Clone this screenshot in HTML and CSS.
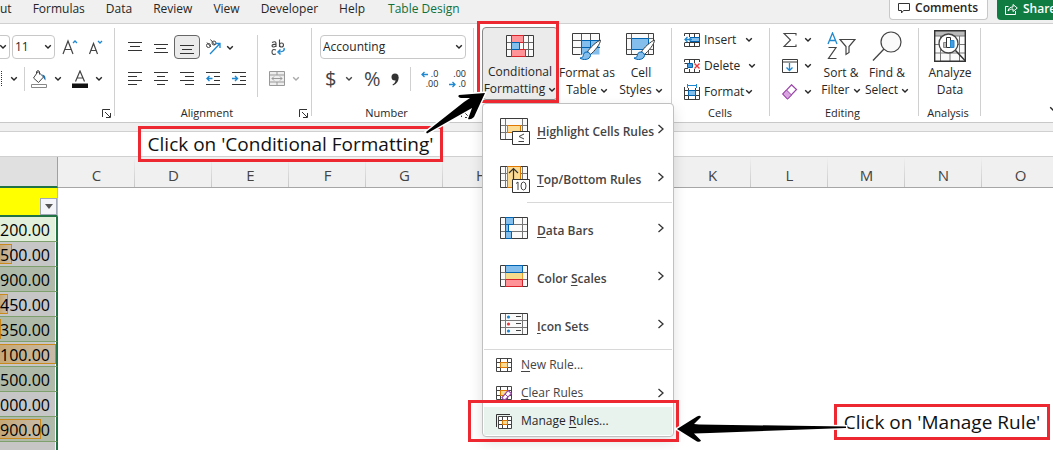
FILE: index.html
```html
<!DOCTYPE html>
<html lang="en">
<head>
<meta charset="utf-8">
<title>Conditional Formatting</title>
<link rel="stylesheet" href="styles.css">
</head>
<body>
<svg class="defs" aria-hidden="true">
  <symbol id="chev" viewBox="0 0 8 6"><path d="M1.2 1.2 4 4 6.800 1.200" fill="none" stroke="currentColor" stroke-width="1.400"/></symbol>
  <symbol id="launch" viewBox="0 0 9 9"><path d="M.5 8V.5H8M3 3l5 5M8.500 4v4.500H4" fill="none" stroke="#333"/></symbol>
  <symbol id="next" viewBox="0 0 8 10"><path d="M1.500 1 6 5 1.500 9" fill="none" stroke="#333" stroke-width="1.300"/></symbol>
  <symbol id="grid" viewBox="0 0 28 22"><path d="M.5.5h27v21H.5z" fill="#fafafa"/><path d="M5.500 1v20M22.500 1v20M1 7.500h26M1 14.500h26" stroke="#777"/><path d="M.5.5h27v21H.5z" fill="none" stroke="#3b3b3b"/></symbol>
  <symbol id="brush" viewBox="0 0 24 22"><path d="M21.500 1.200C18 2 10 9.500 8.500 13l3 2.500C15 12.500 21.500 5 21.500 1.200z" fill="#fff" stroke="#3b3b3b"/><path d="M8 13c-3 0-3.500 2-3.800 3.800C4 18.500 2.500 19 1 19c3 2.500 10 2 10.500-2.500C11.500 14.500 10 13 8 13z" fill="#83beec" stroke="#0063b1"/></symbol>
</svg>
<div class="app">
  <header class="tabs">
    <nav class="tab-list">
      <button class="tab">ut</button><button class="tab">Formulas</button><button class="tab">Data</button><button class="tab">Review</button><button class="tab">View</button><button class="tab">Developer</button><button class="tab">Help</button><button class="tab active">Table Design</button>
    </nav>
    <button class="comments"><svg width="12" height="12" viewBox="0 0 12 12"><path d="M.5 1.500h11v7H5.500L3.500 11V8.500h-3z" fill="none" stroke="#333"/></svg>Comments</button>
    <button class="share"><svg width="13" height="12" viewBox="0 0 13 12"><path d="M3.500 3.500h-3v8h10V8M3 8c.5-3 2.500-4 5-4V1.500L12.300 5 8 8.500V6C6 6 4.500 6.500 3 8z" fill="none" stroke="#fff"/></svg>Share</button>
  </header>

  <section class="ribbon">
    <div class="group font">
      <div class="tools">
        <div class="row">
          <span class="pick name"><select aria-label="Font name"><option></option></select><svg class="chev"><use href="#chev"/></svg></span>
          <span class="pick size"><select aria-label="Font size"><option>11</option></select><svg class="chev"><use href="#chev"/></svg></span>
          <button class="tool" aria-label="Increase font size"><svg width="16" height="16" viewBox="0 0 16 16"><path d="M1 15 6 2l5 13M2.500 10.500h7" fill="none" stroke="#444" stroke-width="1.200"/><path d="m11 4 2-2 2 2" fill="none" stroke="#1e88d0" stroke-width="1.300"/></svg></button>
          <button class="tool" aria-label="Decrease font size"><svg width="16" height="16" viewBox="0 0 16 16"><path d="m1.500 15 4-10.500 4 10.500M3 11.500h5" fill="none" stroke="#444" stroke-width="1.200"/><path d="m10 2 2 2 2-2" fill="none" stroke="#1e88d0" stroke-width="1.300"/></svg></button>
        </div>
        <div class="row">
          <button class="borders" aria-label="Borders"><svg width="3" height="16" viewBox="0 0 3 16"><path d="M1.500 0v16" stroke="#333" stroke-dasharray="1 1"/></svg><svg class="chev"><use href="#chev"/></svg></button>
          <i class="bar"></i>
          <button class="split" aria-label="Fill color"><svg width="16" height="18" viewBox="0 0 16 18"><path d="M7 1.500 12.500 7l-5 5.500L2.500 8zM5.500 3.500V1.500q1.500-2 3 0v3" fill="none" stroke="#444"/><path d="M11 4.500q4 0 3.500 6-1.500-1-3-5z" fill="#1e70b0"/><path d="M.5 14.500h15v3H.5z" fill="#fff" stroke="#888"/></svg><svg class="chev"><use href="#chev"/></svg></button>
          <button class="split" aria-label="Font color"><svg width="16" height="18" viewBox="0 0 16 18"><path d="M3.500 11.500 8 1l4.500 10.500M5 8h6" fill="none" stroke="#444" stroke-width="1.200"/><path d="M0 13.500h16V18H0z" fill="#111"/></svg><svg class="chev"><use href="#chev"/></svg></button>
        </div>
      </div>
      <div class="caption"><span></span><svg class="launch"><use href="#launch"/></svg></div>
    </div>

    <div class="group align">
      <div class="tools wide">
        <div class="col">
          <div class="row flush">
            <button class="tool" aria-label="Top align"><svg width="14" height="14" viewBox="0 0 14 14"><path d="M0 2.500h14M2 6.500h10M0 10.500h14" stroke="#333"/></svg></button>
            <button class="tool" aria-label="Middle align"><svg width="14" height="14" viewBox="0 0 14 14"><path d="M0 4.500h14M2 8.500h10M0 12.500h14" stroke="#333"/></svg></button>
            <button class="tool on" aria-label="Bottom align"><svg width="14" height="14" viewBox="0 0 14 14"><path d="M0 5.500h14M2 9.500h10M0 13.500h14" stroke="#333"/></svg></button>
            <button class="tool" aria-label="Orientation"><svg width="16" height="16" viewBox="0 0 16 16"><g fill="none" stroke="#444"><circle cx="3.500" cy="6.500" r="2"/><path d="m2 3.500 4 4.500M5.500.5 10 6"/><circle cx="9" cy="4" r="2"/></g><path d="M5 15 15 4.500M10.500 4.500H15V9" fill="none" stroke="#1e88d0" stroke-width="1.300"/></svg></button>
            <button class="drop" aria-label="Orientation options"><svg class="chev"><use href="#chev"/></svg></button>
          </div>
          <div class="row flush">
            <button class="tool" aria-label="Align left"><svg width="14" height="14" viewBox="0 0 14 14"><path d="M0 .5h14M0 4.500h9M0 8.500h14M0 12.500h9" stroke="#333"/></svg></button>
            <button class="tool" aria-label="Center"><svg width="14" height="14" viewBox="0 0 14 14"><path d="M0 .5h14M3 4.500h8M0 8.500h14M3 12.500h8" stroke="#333"/></svg></button>
            <button class="tool" aria-label="Align right"><svg width="14" height="14" viewBox="0 0 14 14"><path d="M0 .5h14M5 4.500h9M0 8.500h14M5 12.500h9" stroke="#333"/></svg></button>
            <button class="tool" aria-label="Decrease indent"><svg width="14" height="14" viewBox="0 0 14 14"><path d="M0 .5h14M8 4.500h6M8 8.500h6M0 12.500h14" stroke="#333"/><path d="M6.500 6.500H1M3.500 4 1 6.500 3.500 9" fill="none" stroke="#1e88d0" stroke-width="1.400"/></svg></button>
            <button class="tool" aria-label="Increase indent"><svg width="14" height="14" viewBox="0 0 14 14"><path d="M0 .5h14M8 4.500h6M8 8.500h6M0 12.500h14" stroke="#333"/><path d="M0 6.500h5.500M3 4l2.500 2.500L3 9" fill="none" stroke="#1e88d0" stroke-width="1.400"/></svg></button>
          </div>
        </div>
        <i class="bar tall"></i>
        <div class="col">
          <div class="row flush"><button class="tool wrap" aria-label="Wrap text"><svg width="15" height="17" viewBox="0 0 15 17"><g fill="none" stroke="#444" stroke-width="1.100"><path d="M1 3.500q4-2 4 1V8M5 5.500Q1 5 1 7q1 2 4 0M8.500.5V8"/><circle cx="10.500" cy="6" r="2"/><path d="M5 11q-4-1.500-4 2t4 2"/></g><path d="M13 9q1.500 4-6 4M9.500 10.500 7 13l2.500 2.500" fill="none" stroke="#1e88d0" stroke-width="1.500"/></svg></button></div>
          <div class="row flush"><button class="split faded" aria-label="Merge"><svg width="16" height="16" viewBox="0 0 16 16"><path d="M.5.5h15v14H.5zM.5 4h15M.5 11h15M8 .5V4M8 11v3.500" fill="#eee" stroke="#999"/><path d="M3 7.500h10M5 5.500l-2 2 2 2M11 5.500l2 2-2 2" fill="none" stroke="#999"/></svg><svg class="chev"><use href="#chev"/></svg></button></div>
        </div>
      </div>
      <div class="caption"><span>Alignment</span><svg class="launch"><use href="#launch"/></svg></div>
    </div>

    <div class="group number">
      <div class="tools">
        <span class="pick format"><select aria-label="Number format"><option>Accounting</option></select><svg class="chev"><use href="#chev"/></svg></span>
        <div class="row num">
          <button class="split sym">$<svg class="chev"><use href="#chev"/></svg></button>
          <button class="sym">%</button>
          <button aria-label="Comma style"><svg width="8" height="13" viewBox="0 0 8 13"><circle cx="4" cy="4" r="3.500" fill="#333"/><path d="M7.500 4Q8 10 2 12.500L1.500 11.500Q5 9.500 4.500 6z" fill="#333"/></svg></button>
          <i class="bar"></i>
          <button class="dec" aria-label="Increase decimal"><span>.0</span><span>.00</span><svg class="left" width="7" height="7" viewBox="0 0 7 7"><path d="M7 3.500H1M3.500 1 1 3.500 3.500 6" fill="none" stroke="#1e88d0" stroke-width="1.300"/></svg></button>
          <button class="dec" aria-label="Decrease decimal"><span>.00</span><span>.0</span><svg class="right" width="7" height="7" viewBox="0 0 7 7"><path d="M0 3.500h6M3.500 1 6 3.500 3.500 6" fill="none" stroke="#1e88d0" stroke-width="1.300"/></svg></button>
        </div>
      </div>
      <div class="caption"><span>Number</span><svg class="launch"><use href="#launch"/></svg></div>
    </div>

    <div class="group styles">
      <button class="big pressed"><svg width="28" height="24" viewBox="0 0 28 24"><path d="M.5 1.500h27v21H.5z" fill="#fafafa"/><path d="M5.500 1.500v21M17.500 1.500v21M22.500 1.500v21M0 8.500h28M0 15.500h28" stroke="#666"/><path d="M.5 1.500h27v21H.5z" fill="none" stroke="#3b3b3b"/><path d="M5.500 1.500h12v7h-12zM5.500 15.500h14v7h-14z" fill="#ff9398" stroke="#d8232a"/><path d="M5.500 8.500h8v7h-8z" fill="#83beec" stroke="#0063b1"/></svg><span>Conditional</span><span>Formatting <svg class="chev"><use href="#chev"/></svg></span></button>
      <button class="big"><svg width="31" height="28" viewBox="0 0 31 28"><path d="M.5 1.500h27v21H.5z" fill="#fafafa"/><path d="M9.500 8.500h18v14h-18z" fill="#83beec"/><path d="M9.500 1.500v21M18.500 1.500v21M0 8.500h28M0 15.500h28" stroke="#555"/><path d="M9.500 22.500v-14h18M9.500 15.500h18M18.500 8.500v14" fill="none" stroke="#0063b1"/><path d="M27.500 8V1.500H.5v21h8" fill="none" stroke="#3b3b3b"/><use href="#brush" x="7" y="7" width="24" height="22"/></svg><span>Format as</span><span>Table <svg class="chev"><use href="#chev"/></svg></span></button>
      <button class="big"><svg width="31" height="28" viewBox="0 0 31 28"><path d="M.5 1.500h27v21H.5z" fill="#fafafa"/><path d="M5.500 1.500v21M22.500 1.500v21M0 6.500h28M0 17.500h28" stroke="#666"/><path d="M.5 1.500h27v21H.5z" fill="none" stroke="#3b3b3b"/><path d="M5.500 6.500h17v11h-17z" fill="#83beec" stroke="#0063b1"/><use href="#brush" x="7" y="7" width="24" height="22"/></svg><span>Cell</span><span>Styles <svg class="chev"><use href="#chev"/></svg></span></button>
    </div>

    <div class="group cells">
      <div class="list">
        <button class="line"><svg width="16" height="14" viewBox="0 0 16 14"><path d="M.5 3V.5h15v13H.5V10M5.500.5V4M10.500.5v13M5.500 10v3.500M.5 9.500h15" fill="none" stroke="#3b3b3b"/><path d="M6 4.500h9.500v4H6z" fill="#83beec" stroke="#0063b1"/><path d="M8 6.500H1M3.500 4 1 6.500 3.500 9" fill="none" stroke="#1e88d0" stroke-width="1.300"/></svg><span>Insert</span><svg class="chev"><use href="#chev"/></svg></button>
        <button class="line"><svg width="16" height="14" viewBox="0 0 16 14"><path d="M.5 3V.5h15V3M.5 10v3.500h15V11M5.500.5V4M10.500.5V4M5.500 10v3.500M10.500 10v3.500M.5 4.500H4M.5 9.500H4" fill="none" stroke="#3b3b3b"/><path d="M3.500 4.500h5v4h-5z" fill="#4a9bdd" stroke="#0063b1"/><path d="m10.500 4.500 5 5m0-5-5 5" stroke="#e8393f" stroke-width="1.400"/></svg><span class="longer">Delete</span><svg class="chev"><use href="#chev"/></svg></button>
        <button class="line"><svg width="16" height="16" viewBox="0 0 16 16"><path d="M.5 3v12.500h15V3M4.500 4v11.500M11.500 4v11.500M.5 6.500h15M.5 11.500h15" fill="none" stroke="#3b3b3b"/><path d="M4.500 6.500h7v5h-7z" fill="#83beec" stroke="#0063b1"/><path d="M3.500 0v4M12.500 0v4M3.500 1.500h9" stroke="#1e88d0"/></svg><span>Format</span><svg class="chev"><use href="#chev"/></svg></button>
      </div>
      <div class="caption"><span>Cells</span></div>
    </div>

    <div class="group editing">
      <div class="tools wide">
        <div class="list">
          <button class="line" aria-label="AutoSum"><svg width="16" height="14" viewBox="0 0 16 14"><path d="M14 2.500V.5H2L8.500 7 2 13.500h12v-2" fill="none" stroke="#444" stroke-width="1.100"/></svg><svg class="chev"><use href="#chev"/></svg></button>
          <button class="line" aria-label="Fill"><svg width="16" height="14" viewBox="0 0 16 14"><path d="M.5.5h15v13H.5zM.5 3h15" fill="none" stroke="#3b3b3b"/><path d="M7.500 4v7M4.500 8.500l3 3 3-3" fill="none" stroke="#1e88d0" stroke-width="1.300"/></svg><svg class="chev"><use href="#chev"/></svg></button>
          <button class="line" aria-label="Clear"><svg width="16" height="16" viewBox="0 0 16 16"><path d="M9.500.8 14.500 5.500 5.500 15 .8 10z" fill="#fff" stroke="#9a45a8" stroke-width="1.200"/><path d="M4.500 6 9.500 11l-4 4L.8 10z" fill="#d9a5e0" stroke="#9a45a8"/></svg><svg class="chev"><use href="#chev"/></svg></button>
        </div>
        <button class="big"><svg width="29" height="28" viewBox="0 0 29 28"><path d="M1 12 5.500 1 10 12M2.500 8.500h6" fill="none" stroke="#1e88d0" stroke-width="1.300"/><path d="M1.500 15.500H9l-7.500 11H9.500" fill="none" stroke="#444" stroke-width="1.200"/><path d="M13 7.500h15l-6 7v6l-3 2v-8z" fill="#fff" stroke="#444" stroke-width="1.200"/></svg><span>Sort &amp;</span><span>Filter <svg class="chev"><use href="#chev"/></svg></span></button>
        <button class="big"><svg width="30" height="30" viewBox="0 0 30 30"><circle cx="19" cy="11" r="10" fill="#fafafa" stroke="#444" stroke-width="1.200"/><path d="M12 18 1 29.500" stroke="#444" stroke-width="1.300"/></svg><span>Find &amp;</span><span>Select <svg class="chev"><use href="#chev"/></svg></span></button>
      </div>
      <div class="caption"><span>Editing</span></div>
    </div>

    <div class="group analysis">
      <button class="big"><svg width="32" height="32" viewBox="0 0 32 32"><path d="M.5.5h31v31H.5z" fill="#fafafa"/><path d="M1 1h30v5H1z" fill="#bbb"/><path d="M0 6h32M0 14.500h32M0 23h32M6.500 6v26M16 6v26M25.500 6v26" stroke="#777"/><path d="M.7.7h30.600v30.600H.7z" fill="none" stroke="#333" stroke-width="1.400"/><circle cx="14.500" cy="13.500" r="9.500" fill="#fff" stroke="#444" stroke-width="1.300"/><path d="M9.500 12.500h3v5h-3z" fill="#bbb" stroke="#888"/><path d="M12.500 7.500h4v10h-4z" fill="#fff" stroke="#333"/><path d="M16.500 10.500h3.500v7h-3.500z" fill="#4a9bdd" stroke="#1e88d0"/><path d="m21.500 20.500 10 10.500" stroke="#333" stroke-width="1.500"/></svg><span>Analyze</span><span>Data</span></button>
      <div class="caption"><span>Analysis</span></div>
    </div>
    <div class="ribbon-end"><svg class="chev"><use href="#chev"/></svg></div>
  </section>

  <input class="formula" type="text" aria-label="Formula bar">

  <table class="sheet">
    <colgroup><col class="first"><col span="13" class="rest"></colgroup>
    <thead><tr><th class="sel"></th><th>C</th><th>D</th><th>E</th><th>F</th><th>G</th><th>H</th><th></th><th></th><th>K</th><th>L</th><th>M</th><th>N</th><th>O</th></tr></thead>
    <tbody>
      <tr class="head"><td><button class="filter" aria-label="Filter"><svg width="8" height="5" viewBox="0 0 8 5"><path d="M0 0h8L4 5z" fill="#555"/></svg></button></td></tr>
      <tr class="first-row"><td>200.00</td></tr>
      <tr class="odd"><td><i class="data" style="width:12px"></i><b>500.00</b></td></tr>
      <tr class="even"><td>900.00</td></tr>
      <tr class="odd"><td><i class="data" style="width:8px"></i><b>450.00</b></td></tr>
      <tr class="even"><td><i class="data" style="width:1px"></i><b>350.00</b></td></tr>
      <tr class="odd"><td><i class="data" style="width:56px"></i><b>100.00</b></td></tr>
      <tr class="even"><td>500.00</td></tr>
      <tr class="odd"><td>000.00</td></tr>
      <tr class="even"><td><i class="data" style="width:41px"></i><b>900.00</b></td></tr>
      <tr class="odd"><td></td></tr>
    </tbody>
  </table>

  <div class="menu">
    <button class="item"><svg width="31" height="28" viewBox="0 0 31 28"><use href="#grid" width="28" height="22"/><path d="M7.500 7.500h13v7h-13z" fill="#fcdc94" stroke="#e07800"/><path d="M12.500 13.500h17v13h-17z" fill="#fff" stroke="#333"/><path d="m24 16-5 2.500 5 2.500M18.500 23.500H24" fill="none" stroke="#444"/></svg><span><u>H</u>ighlight Cells Rules</span><svg class="next"><use href="#next"/></svg></button>
    <button class="item"><svg width="31" height="28" viewBox="0 0 31 28"><use href="#grid" width="28" height="22"/><path d="M7.500.5h13v21h-13z" fill="#fcdc94" stroke="#e07800"/><path d="M13.500 13V3M9 7l4.500-4.500L18 7" fill="none" stroke="#333" stroke-width="1.200"/><path d="M12.500 13.500h17v13h-17z" fill="#fff" stroke="#333"/><path d="m16 17.500 2-1.500v8" fill="none" stroke="#444"/><ellipse cx="23.500" cy="20" rx="2.500" ry="4" fill="none" stroke="#444"/></svg><span><u>T</u>op/Bottom Rules</span><svg class="next"><use href="#next"/></svg></button>
    <hr class="inset">
    <button class="item"><svg width="31" height="28" viewBox="0 0 31 28"><use href="#grid" width="28" height="22"/><path d="M5.500.5h8v7h-8zM5.500 7.500h3v7h-3zM5.500 14.500h6v7h-6z" fill="#83beec" stroke="#0063b1"/></svg><span><u>D</u>ata Bars</span><svg class="next"><use href="#next"/></svg></button>
    <button class="item"><svg width="31" height="28" viewBox="0 0 31 28"><use href="#grid" width="28" height="22"/><path d="M5.500 7.500h17v7h-17z" fill="#f5db8c" stroke="#e0a030"/><path d="M5.500.5h17v7h-17z" fill="#83beec" stroke="#0063b1"/><path d="M5.500 14.500h17v7h-17z" fill="#ff9398" stroke="#d8232a"/></svg><span>Color <u>S</u>cales</span><svg class="next"><use href="#next"/></svg></button>
    <button class="item"><svg width="31" height="28" viewBox="0 0 31 28"><use href="#grid" width="28" height="22"/><circle cx="8.500" cy="4" r="1.600" fill="#1e88d0"/><circle cx="8.500" cy="11" r="1.600" fill="#e8393f"/><circle cx="8.500" cy="18" r="1.600" fill="#1e88d0"/><path d="M16 3.500h5M16 10.500h5M16 17.500h5" stroke="#444"/></svg><span><u>I</u>con Sets</span><svg class="next"><use href="#next"/></svg></button>
    <hr>
    <button class="item small"><svg width="16" height="14" viewBox="0 0 16 14"><path d="M.5.5h15v13H.5zM4.500.5v13M11.500.5v13M.5 4.500h15M.5 9.500h15" fill="#fff" stroke="#444"/><path d="M4.500 4.500h7v5h-7z" fill="#fcdc94" stroke="#e07800"/></svg><span><u>N</u>ew Rule...</span></button>
    <button class="item small"><svg width="16" height="14" viewBox="0 0 16 14"><path d="M.5.5h15v13H.5zM4.500.5v13M11.500.5v13M.5 4.500h15M.5 9.500h15" fill="#fff" stroke="#444"/><path d="M4.500 4.500h7v5h-7z" fill="#fcdc94" stroke="#e07800"/><path d="m12 4.500 3.500 3-6 6h-2l-1.500-2z" fill="#fff" stroke="#9a45a8" stroke-width="1.200"/><path d="m9 8 3 3" stroke="#9a45a8"/></svg><span><u>C</u>lear Rules</span><svg class="next"><use href="#next"/></svg></button>
    <button class="item small hover"><svg width="16" height="15" viewBox="0 0 16 15"><path d="M.5 13V.5H14" fill="none" stroke="#333"/><path d="M2.500 2.500h13v12h-13zM6.500 2.500v12M11.500 2.500v12M2.500 6.500h13M2.500 10.500h13" fill="#fff" stroke="#444"/><path d="M6.500 6.500h5v4h-5z" fill="#fcdc94" stroke="#e07800"/></svg><span>Manage <u>R</u>ules...</span></button>
  </div>

  <div class="mark button-mark"></div>
  <div class="mark item-mark"></div>
  <div class="mark note note-top">Click on 'Conditional Formatting'</div>
  <div class="mark note note-bottom">Click on 'Manage Rule'</div>
  <svg class="arrows" width="1053" height="450" viewBox="0 0 1053 450" aria-hidden="true">
    <path d="M427 133.500 472 108 468 119Q471 120 474 117L485 93 459 95Q457 97 461 98L470 98 464 102 426 132z" fill="#000" stroke="#fff" stroke-width="3" paint-order="stroke"/>
    <path d="M846 426.500 699 424.500 694 424 701 417Q700 415 697 416.500L677 429 697 441.500Q700 442.500 701 440.500L694 433.500 710 433 846 428z" fill="#000" stroke="#fff" stroke-width="3" paint-order="stroke"/>
  </svg>
</div>
</body>
</html>
```

FILE: styles.css
```css
* { box-sizing: border-box; }
body { margin: 0; background: #fff; font: 12px/16px "Open Sans", "Noto Sans", sans-serif; color: #262626; overflow: hidden; }
button { border: 0; padding: 0; background: none; font: inherit; color: inherit; }
svg { display: block; flex: none; }
.defs { position: absolute; width: 0; height: 0; }
.app { position: relative; min-height: 100vh; overflow: hidden; background: #f0f0f0; }
.chev { width: 8px; height: 6px; display: inline-block; }
.launch { width: 9px; height: 9px; }
.next { width: 8px; height: 10px; }

.tabs { display: flex; height: 24px; border-bottom: 1px solid #d0d0d0; overflow: hidden; }
.tab-list { display: flex; flex: 1; gap: 21px; height: 17px; }
.active { color: #0f703b; padding-left: 2px; }
.comments, .share { display: flex; align-items: center; gap: 5px; height: 20px; font-weight: 600; white-space: nowrap; }
.comments { padding: 0 9px 3px 8px; border: 1px solid #c8c8c8; border-top: 0; border-radius: 0 0 4px 4px; background: #fff; margin-right: 9px; }
.share { width: 56px; padding: 0 0 3px 8px; background: #107c41; color: #fff; border-radius: 0 0 0 4px; }

.ribbon { display: grid; grid-template-columns: 115px 197px 162px 198px 98px 149px 62px 1fr; height: 99px; background: #fff; border-bottom: 1px solid #c8c8c8; }
.group { position: relative; display: flex; flex-direction: column; padding-top: 11px; min-width: 0; }
.group::after { content: ""; position: absolute; right: 0; top: 4px; bottom: 6px; width: 1px; background: #d0d0d0; }
.tools { display: flex; flex-direction: column; gap: 8px; }
.tools.wide { flex-direction: row; gap: 0; }
.col { display: flex; flex-direction: column; gap: 8px; }
.row { display: flex; align-items: center; height: 24px; }
.tool { display: flex; align-items: center; justify-content: center; width: 26px; height: 24px; }
.tool.on { background: #ebebeb; border: 1px solid #666; border-radius: 4px; }
.split { display: flex; align-items: center; gap: 7px; }
.bar { flex: none; width: 1px; height: 24px; background: #d0d0d0; }
.bar.tall { height: 62px; margin: 0 7px 0 5px; }
.caption { display: flex; align-items: center; min-height: 17px; margin-top: auto; padding: 0 4px 1px 0; font-size: 11px; }
.caption span { flex: 1; text-align: center; }
.pick { position: relative; display: block; height: 24px; border: 1px solid #c8c8c8; border-radius: 4px; }
.pick select { appearance: none; width: 100%; height: 22px; border: 0; padding: 0 2px; background: none; font: inherit; color: inherit; }
.pick .chev { position: absolute; right: 2px; top: 8px; }

.name { width: 10px; border-left: 0; border-radius: 0 4px 4px 0; }
.size { width: 43px; margin: 0 2px; }
.borders { display: flex; align-items: center; width: 24px; gap: 7px; }
.font .split { margin-left: 6px; width: 35px; }
.align .tools { padding-left: 7px; }
.align .col:first-child { width: 130px; }
.align .split { padding-left: 4px; gap: 7px; }
.faded .chev { color: #aaa; }
.drop { width: 8px; }
.number .tools { padding: 0 8px; }
.num { justify-content: space-between; }
.sym { font-size: 20px; line-height: 24px; color: #444; padding-left: 5px; }
.num .split { gap: 9px; }
.num .sym:nth-child(2) { padding: 0; }
.dec { position: relative; display: flex; flex-direction: column; width: 17px; font-size: 9px; line-height: 10px; text-align: right; }
.dec .left { position: absolute; left: 0; top: 2px; }
.dec .right { position: absolute; left: 0; bottom: 1px; }

.big { display: grid; grid-template-rows: 1fr 17px 17px; justify-items: center; align-items: center; height: 73px; padding-bottom: 2px; white-space: nowrap; line-height: 17px; }
.styles { display: grid; grid-template-columns: 76px 58px 50px; padding: 3px 0 0 8px; align-content: start; }
.pressed { background: #ebebeb; border: 1px solid #888; border-radius: 4px; }
.list { display: flex; flex-direction: column; }
.line { display: flex; align-items: center; gap: 4px; height: 26px; text-align: left; }
.cells { padding: 3px 0 0 12px; }
.cells .line span { width: 37px; }
.cells .line .longer { width: 40px; }
.cells .caption { padding-right: 14px; }
.editing, .analysis { padding-top: 3px; }
.editing .list { width: 48px; padding-left: 12px; }
.editing .line { gap: 6px; }
.editing .tools .big { width: 46px; }
.ribbon-end { display: flex; align-items: flex-end; justify-content: flex-end; padding-bottom: 10px; margin-right: -4px; overflow: hidden; }

.formula { display: block; width: 100%; height: 26px; margin: 8px 0 0; padding: 0 8px; border: 1px solid #d0d0d0; border-width: 1px 0; background: #fff; outline: 0; font: inherit; }

.sheet { border-collapse: separate; border-spacing: 0; table-layout: fixed; width: 1059px; background: #fff; font-size: 16px; color: #000; }
.first { width: 58px; }
.rest { width: 77px; }
.sheet th { height: 31px; padding: 6px 0 0; font-size: 15px; line-height: 22px; font-weight: 400; color: #444; border-bottom: 1px solid #a6a6a6; background: linear-gradient(#f0f0f0, #c8c8c8) right / 1px 100% no-repeat #f0f0f0; }
.sheet .sel { background: #e0e0e0; border-right: 1px solid #a0a0a0; border-bottom: 2px solid #217346; }
.sheet td { position: relative; height: 25px; padding: 2px 7px 0 0; line-height: 22px; text-align: right; border-bottom: 1px solid #7da06c; border-right: 2px solid #217346; box-shadow: inset -1px 0 #fff; white-space: nowrap; }
.sheet b { position: relative; font-weight: 400; }
.sheet .head td { height: 29px; padding: 0; background: #ff0; border-right: 1px solid #b5c9a8; border-bottom: 2px solid #217346; vertical-align: bottom; box-shadow: none; }
.first-row td { background: #e2efda; }
.odd td { background: #c6c6c6; }
.even td { background: #afbaa9; }
.data { position: absolute; left: 0; top: 2px; bottom: 2px; border: 1px solid #c98a1b; border-left: 0; background: linear-gradient(90deg, #c6a876, #c8bba8); }
.filter { display: flex; align-items: center; justify-content: center; width: 17px; height: 17px; margin-left: auto; border: 1px solid #a0a8b8; background: #f3f5f9; }

.menu { position: absolute; left: 482px; top: 103px; width: 192px; padding: 2px 1px 1px; background: #fff; border: 1px solid #c0c0c0; border-radius: 4px; box-shadow: 0 5px 14px rgba(0, 0, 0, .13); }
.item { display: flex; width: 100%; height: 48px; padding: 12px 7px 0 16px; gap: 6px; text-align: left; font-weight: 600; color: #444; }
.item span { flex: 1; min-width: 0; padding-top: 6px; white-space: nowrap; }
.item .next { margin-top: 6px; }
.item.small { height: 28px; padding: 0 7px 0 12px; gap: 9px; align-items: center; font-weight: 400; }
.item.small span { padding: 0; }
.item.small .next { margin: 0; }
.item.hover { background: #e9f3ee; color: #262626; }
.menu hr { height: 1px; margin: 0 0 1px; border: 0; background: #d8d8d8; }
.menu .inset { margin: 0 0 2px 43px; }
u { text-underline-offset: 2px; }

.mark { position: absolute; border: 3px solid #ed2830; }
.button-mark { left: 477px; top: 21px; width: 82px; height: 82px; }
.item-mark { left: 468px; top: 400px; width: 211px; height: 42px; }
.note { padding: 0 5px; font-size: 19px; line-height: 30px; color: #111; white-space: nowrap; text-align: center; }
.note-top { left: 138px; top: 126px; width: 305px; }
.note-bottom { left: 834px; top: 404px; width: 216px; }
.arrows { position: absolute; left: 0; top: 0; }
```
